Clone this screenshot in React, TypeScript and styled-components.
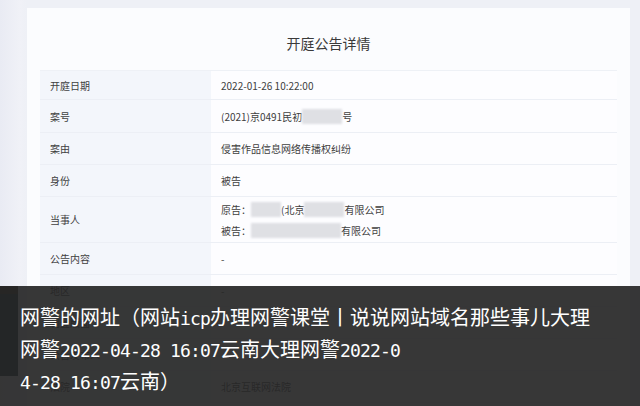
import React from 'react'
import styled, { createGlobalStyle } from 'styled-components'

interface Row {
  label: string
  values: string[]
  height: number
}

const rows: Row[] = [
  { label: '开庭日期', values: ['2022-01-26 10:22:00'], height: 29 },
  { label: '案号', values: ['(2021)京0491民初■■■■号'], height: 33 },
  { label: '案由', values: ['侵害作品信息网络传播权纠纷'], height: 32 },
  { label: '身份', values: ['被告'], height: 32 },
  {
    label: '当事人',
    values: ['原告：■■■(北京■■■■有限公司', '被告：■■■■■■■■■有限公司'],
    height: 46,
  },
  { label: '公告内容', values: ['-'], height: 32 },
  { label: '地区', values: ['-'], height: 32 },
  { label: '刊登版面', values: ['-'], height: 32 },
  { label: '公告发布人', values: [''], height: 32 },
  { label: '法院', values: ['北京互联网法院'], height: 32 },
]

const GlobalStyle = createGlobalStyle`
  html, body {
    margin: 0;
    padding: 0;
    background: #eef0f6;
  }
  body {
    font-family: 'Noto Sans CJK SC', 'Noto Sans', sans-serif;
  }
`

const Page = styled.div`
  position: relative;
  width: 640px;
  height: 406px;
  overflow: hidden;
  box-sizing: border-box;
  padding: 8px 10px 0 27px;
  background: linear-gradient(90deg, #e9ebf3 0, #f0f1f7 20px, #eef0f6 27px);
`

const Card = styled.div`
  display: flex;
  flex-direction: column;
  background: #fbfcfe;
  padding: 0 13px;
  height: 100%;
`

const Title = styled.div`
  padding-top: 25px;
  margin-bottom: 17px;
  line-height: 20px;
  font-size: 14px;
  color: #3a3a3a;
  text-align: center;
`

const Table = styled.div`
  display: grid;
  grid-template-columns: 171px 1fr;
  border-top: 1px solid #eef1f6;
`

const Label = styled.div<{ $h: number }>`
  height: ${(p) => p.$h}px;
  box-sizing: border-box;
  display: flex;
  align-items: center;
  padding-left: 10px;
  background: #f3f6fb;
  border-bottom: 1px solid #eceff5;
  font-size: 10px;
  color: #404040;
`

const Value = styled.div<{ $h: number }>`
  height: ${(p) => p.$h}px;
  box-sizing: border-box;
  display: flex;
  flex-direction: column;
  justify-content: center;
  gap: 6px;
  padding-left: 10px;
  background: #fdfdff;
  border-bottom: 1px solid #eceff5;
  font-size: 10px;
  color: #404040;
`

const Blur = styled.span`
  color: transparent;
  background: #dfe0e4;
  filter: blur(1px);
`

const Overlay = styled.div`
  position: absolute;
  left: 0;
  right: 0;
  top: 286px;
  bottom: 0;
  background: rgba(38, 38, 38, 0.92);
  padding: 16px 0 0 20px;
  color: #ffffff;
  font-size: 20px;
  line-height: 30px;
  font-family: 'Noto Sans CJK SC', sans-serif;
`

const SideTab = styled.div`
  position: absolute;
  left: 0;
  top: 286px;
  width: 18px;
  height: 90px;
  background: #17253a;
  border-top: 8px solid #3a2a1c;
  box-sizing: border-box;
`

const Line = styled.div`
  white-space: pre;
`

const Mono = styled.span`
  font-family: 'DejaVu Sans Mono', 'Liberation Mono', monospace;
  font-size: 18px;
  letter-spacing: -0.84px;
`

const renderValue = (text: string) => {
  const parts = text.split(/(■+)/)
  return parts.map((part, i) =>
    part.startsWith('■') ? <Blur key={i}>{part}</Blur> : <span key={i}>{part}</span>
  )
}

const App: React.FC = () => {
  return (
    <>
      <GlobalStyle />
      <Page>
        <Card>
          <Title>开庭公告详情</Title>
          <Table>
            {rows.map((row) => (
              <React.Fragment key={row.label}>
                <Label $h={row.height}>{row.label}</Label>
                <Value $h={row.height}>
                  {row.values.map((v, i) => (
                    <div key={i}>{renderValue(v)}</div>
                  ))}
                </Value>
              </React.Fragment>
            ))}
          </Table>
        </Card>
        <SideTab />
        <Overlay>
          <Line>
            网警的网址（网站<Mono>icp</Mono>办理网警课堂丨说说网站域名那些事儿大理
          </Line>
          <Line>
            网警<Mono>2022-04-28 16:07</Mono>云南大理网警<Mono>2022-0</Mono>
          </Line>
          <Line>
            <Mono>4-28 16:07</Mono>云南）
          </Line>
        </Overlay>
      </Page>
    </>
  )
}

export default App
